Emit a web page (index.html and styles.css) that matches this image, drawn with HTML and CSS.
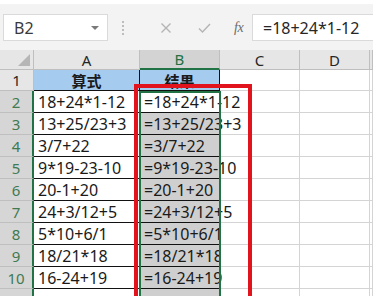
FILE: index.html
```html
<!DOCTYPE html>
<html lang="zh">
<head>
<meta charset="utf-8">
<title>Excel</title>
<link rel="stylesheet" href="styles.css">
</head>
<body>
<div class="app">
  <div class="toolbar">
    <div class="namebox"><span class="ref">B2</span><span class="caret"></span></div>
    <div class="grip"><i></i><i></i><i></i><i></i></div>
    <div class="btns">
      <svg class="ico" width="12" height="12" viewBox="0 0 12 12"><path d="M1.5 1.5L10.5 10.5M10.5 1.5L1.5 10.5" stroke="#b4b4b4" stroke-width="1.4" fill="none"/></svg>
      <svg class="ico" width="13" height="12" viewBox="0 0 13 12"><path d="M1 6.5L4.5 10L12 2" stroke="#b4b4b4" stroke-width="1.4" fill="none"/></svg>
      <span class="fx">fx</span>
    </div>
    <div class="formula">=18+24*1-12</div>
  </div>
  <div class="sheet">
    <div class="grid">
      <div class="corner"><span class="tri"></span></div>
      <div class="ch">A</div>
      <div class="ch sel">B</div>
      <div class="ch">C</div>
      <div class="ch">D</div>
      <div class="ch last"></div>

      <div class="rh">1</div>
      <div class="t hd">算式</div>
      <div class="t hd">结果</div>
      <div class="c"></div><div class="c"></div><div class="c last"></div>

      <div class="rh sel">2</div>
      <div class="t">18+24*1-12</div>
      <div class="t active">=18+24*1-12</div>
      <div class="c"></div><div class="c"></div><div class="c last"></div>

      <div class="rh sel">3</div>
      <div class="t">13+25/23+3</div>
      <div class="t s">=13+25/23+3</div>
      <div class="c"></div><div class="c"></div><div class="c last"></div>

      <div class="rh sel">4</div>
      <div class="t">3/7+22</div>
      <div class="t s">=3/7+22</div>
      <div class="c"></div><div class="c"></div><div class="c last"></div>

      <div class="rh sel">5</div>
      <div class="t">9*19-23-10</div>
      <div class="t s">=9*19-23-10</div>
      <div class="c"></div><div class="c"></div><div class="c last"></div>

      <div class="rh sel">6</div>
      <div class="t">20-1+20</div>
      <div class="t s">=20-1+20</div>
      <div class="c"></div><div class="c"></div><div class="c last"></div>

      <div class="rh sel">7</div>
      <div class="t">24+3/12+5</div>
      <div class="t s">=24+3/12+5</div>
      <div class="c"></div><div class="c"></div><div class="c last"></div>

      <div class="rh sel">8</div>
      <div class="t">5*10+6/1</div>
      <div class="t s clip">=5*10+6/1</div>
      <div class="c"></div><div class="c"></div><div class="c last"></div>

      <div class="rh sel">9</div>
      <div class="t">18/21*18</div>
      <div class="t s clip">=18/21*18</div>
      <div class="c"></div><div class="c"></div><div class="c last"></div>

      <div class="rh sel">10</div>
      <div class="t">16-24+19</div>
      <div class="t s">=16-24+19</div>
      <div class="c"></div><div class="c"></div><div class="c last"></div>

      <div class="rh sel"></div>
      <div class="c"></div>
      <div class="c s"></div>
      <div class="c"></div><div class="c"></div><div class="c last"></div>
    </div>
    <div class="selection"></div>
    <div class="redbox"></div>
  </div>
</div>
</body>
</html>
```

FILE: styles.css
```css
html, body {
  margin: 0;
  padding: 0;
  background: #ffffff;
}
body {
  width: 373px;
  height: 296px;
  overflow: hidden;
  font-family: "Noto Sans", "Noto Sans CJK SC", sans-serif;
}
.app {
  display: flex;
  flex-direction: column;
}
.toolbar {
  height: 46px;
  margin-top: 4px;
  background: #f3f3f3;
  display: flex;
  align-items: flex-start;
  padding-top: 10px;
  box-sizing: border-box;
}
.namebox {
  margin-left: 3px;
  width: 105px;
  height: 27px;
  box-sizing: border-box;
  background: #fff;
  border: 1px solid #dadada;
  display: flex;
  align-items: center;
  justify-content: space-between;
  padding: 0 8px 0 10px;
}
.ref {
  font-size: 16px;
  color: #3a3a3a;
}
.caret {
  width: 0;
  height: 0;
  border-left: 4px solid transparent;
  border-right: 4px solid transparent;
  border-top: 4px solid #7a7a7a;
}
.grip {
  width: 30px;
  height: 27px;
  display: flex;
  flex-direction: column;
  align-items: center;
  justify-content: center;
  gap: 2px;
}
.grip i {
  display: block;
  width: 2px;
  height: 2px;
  background: #bdbdbd;
}
.btns {
  width: 114px;
  height: 27px;
  display: flex;
  align-items: center;
  padding-left: 22px;
  box-sizing: border-box;
  gap: 0;
}
.btns .ico:first-child {
  margin-right: 26px;
}
.btns .ico:nth-child(2) {
  margin-right: 23px;
}
.fx {
  font-family: "Liberation Serif", serif;
  font-style: italic;
  font-size: 14px;
  color: #6b6b6b;
  letter-spacing: -0.5px;
}
.formula {
  flex: 1;
  height: 27px;
  box-sizing: border-box;
  background: #fff;
  border: 1px solid #dadada;
  border-right: none;
  font-size: 16px;
  color: #262626;
  padding-left: 10px;
  display: flex;
  align-items: center;
}
.sheet {
  position: relative;
}
.grid {
  display: grid;
  grid-template-columns: 34px 106px 80px 80px 70px 1fr;
  grid-template-rows: 20px 21px repeat(10, 22px);
}
.grid > div {
  box-sizing: border-box;
  border-right: 1px solid #d4d4d4;
  border-bottom: 1px solid #d4d4d4;
  white-space: nowrap;
  display: flex;
  align-items: center;
}
.corner {
  background: #e6e6e6;
  justify-content: flex-end;
  align-items: flex-end !important;
  padding: 0 3px 3px 0;
  border-color: #bfbfbf !important;
}
.tri {
  width: 0;
  height: 0;
  border-left: 12px solid transparent;
  border-bottom: 12px solid #b6b6b6;
}
.ch {
  background: #e6e6e6;
  justify-content: center;
  font-size: 15px;
  color: #262626;
  border-color: #bfbfbf !important;
}
.ch.sel {
  background: #d3d3d3;
  color: #1e7145;
  border-bottom: 2px solid #217346 !important;
}
.rh {
  background: #e6e6e6;
  justify-content: center;
  font-size: 15px;
  color: #262626;
  border-color: #bfbfbf !important;
}
.rh.sel {
  background: #d6d6d6;
  color: #3f7a52;
  border-right: 2px solid #217346 !important;
}
.c {
  background: transparent;
}
.c.s {
  background: #cfcfcf;
}
.t {
  font-size: 16px;
  color: #1a1a1a;
  padding-left: 4px;
  border-right: 1px solid #111 !important;
  border-bottom: 1px solid #111 !important;
  background: #fff;
}
.t.hd {
  background: #a5cbee;
  font-weight: bold;
  font-size: 15px;
  justify-content: center;
  padding-left: 0;
}
.t.s {
  background: #cfcfcf;
}
.t.active {
  background: #ffffff;
}
.t.clip {
  overflow: hidden;
}
.selection {
  position: absolute;
  left: 139px;
  top: 41px;
  width: 82px;
  height: 220px;
  border: 2px solid #217346;
  box-sizing: border-box;
}
.redbox {
  position: absolute;
  left: 134px;
  top: 34px;
  width: 118px;
  height: 240px;
  border: 4px solid #e1141e;
  box-sizing: border-box;
}
```
